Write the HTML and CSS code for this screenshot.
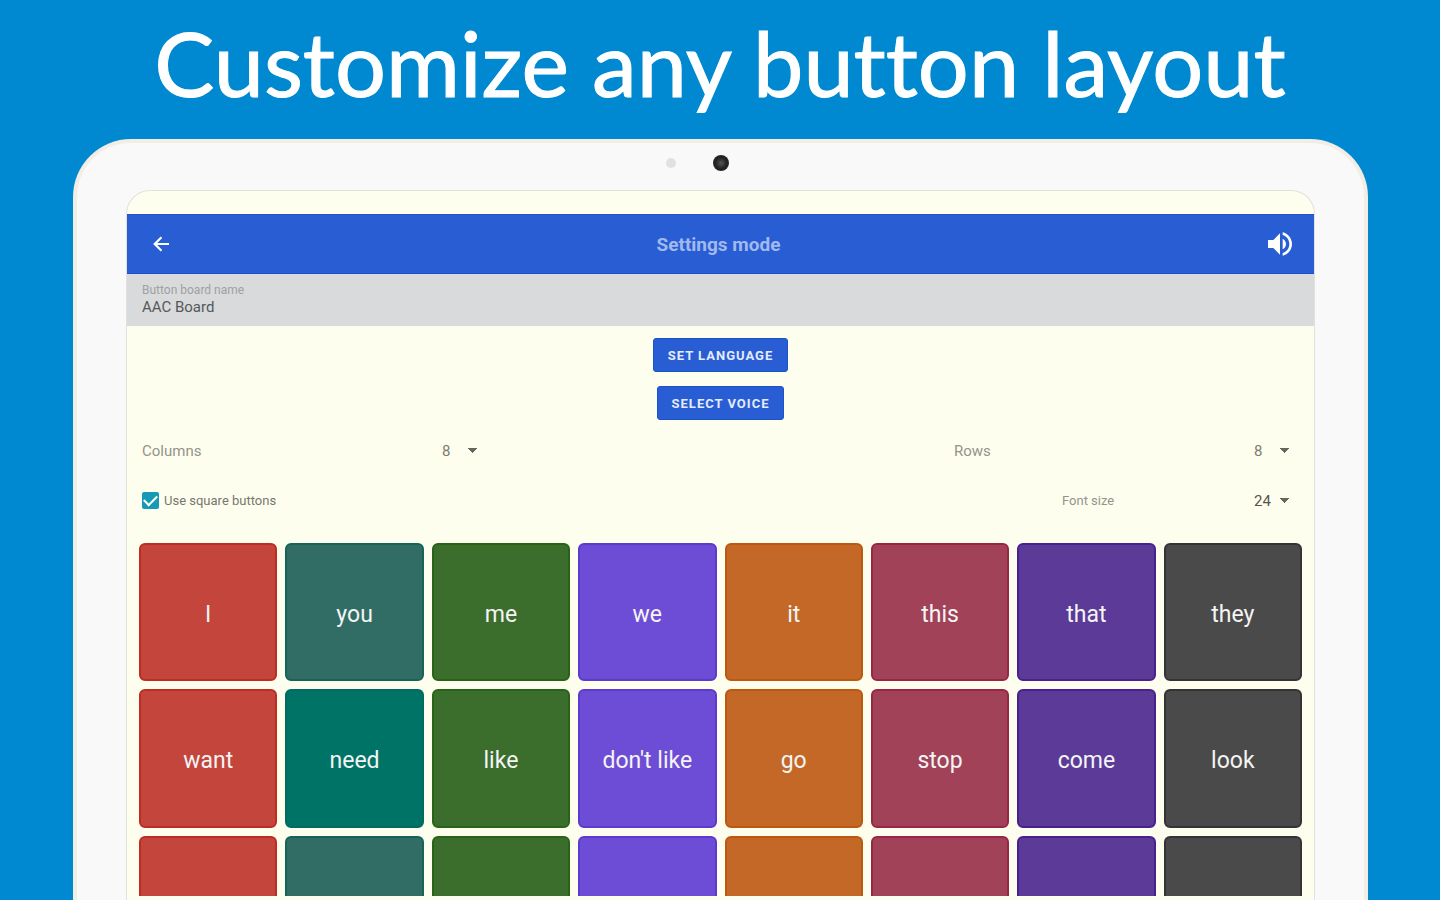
FILE: index.html
```html
<!DOCTYPE html>
<html lang="en">
<head>
<meta charset="utf-8">
<title>Customize any button layout</title>
<link rel="stylesheet" href="styles.css">
</head>
<body>
<h1 class="headline">Customize any button layout</h1>
<div class="tablet">
  <div class="bezel"><span class="sensor"></span><span class="camera"></span></div>
  <main class="screen">
    <header class="appbar">
      <button class="icon-button" aria-label="Back">
        <svg width="24" height="24" viewBox="0 0 24 24" fill="none" stroke="#fff" stroke-width="2.200"><path d="M20 12H6M12.500 5.200L5.700 12l6.800 6.800"/></svg>
      </button>
      <h2 class="appbar-title">Settings mode</h2>
      <button class="icon-button" aria-label="Speak">
        <svg width="32" height="32" viewBox="0 0 24 24" fill="#fff"><path d="M3 9v6h4l5 5V4L7 9H3zm13.500 3c0-1.770-1.020-3.290-2.500-4.030v8.050c1.480-.730 2.500-2.250 2.500-4.020zM14 3.230v2.060c2.890.860 5 3.540 5 6.710s-2.110 5.850-5 6.710v2.060c4.010-.910 7-4.490 7-8.770s-2.990-7.860-7-8.770z"/></svg>
      </button>
    </header>
    <div class="name-field">
      <label class="name-label" for="board-name">Button board name</label>
      <input class="name-input" id="board-name" type="text" value="AAC Board">
    </div>
    <div class="actions">
      <button class="action">SET LANGUAGE</button>
      <button class="action">SELECT VOICE</button>
    </div>
    <div class="options">
      <div class="option option-wide">
        <label for="columns">Columns</label>
        <select class="picker" id="columns"><option>8</option></select>
      </div>
      <div class="option option-wide">
        <label for="rows">Rows</label>
        <select class="picker" id="rows"><option>8</option></select>
      </div>
    </div>
    <div class="options options-last">
      <label class="check"><input class="checkbox" type="checkbox" checked>Use square buttons</label>
      <div class="option option-font">
        <label for="font-size">Font size</label>
        <select class="picker picker-strong" id="font-size"><option>24</option></select>
      </div>
    </div>
    <div class="board">
      <button class="tile red">I</button>
      <button class="tile teal">you</button>
      <button class="tile green">me</button>
      <button class="tile violet">we</button>
      <button class="tile orange">it</button>
      <button class="tile rose">this</button>
      <button class="tile purple">that</button>
      <button class="tile gray">they</button>
      <button class="tile red">want</button>
      <button class="tile deep-teal">need</button>
      <button class="tile green">like</button>
      <button class="tile violet">don't like</button>
      <button class="tile orange">go</button>
      <button class="tile rose">stop</button>
      <button class="tile purple">come</button>
      <button class="tile gray">look</button>
      <button class="tile red" aria-label="Empty"></button>
      <button class="tile teal" aria-label="Empty"></button>
      <button class="tile green" aria-label="Empty"></button>
      <button class="tile violet" aria-label="Empty"></button>
      <button class="tile orange" aria-label="Empty"></button>
      <button class="tile rose" aria-label="Empty"></button>
      <button class="tile purple" aria-label="Empty"></button>
      <button class="tile gray" aria-label="Empty"></button>
    </div>
  </main>
</div>
</body>
</html>
```

FILE: styles.css
```css
* { box-sizing: border-box; }
body {
  margin: 0;
  height: 100vh;
  display: flex;
  flex-direction: column;
  overflow: hidden;
  background: #0089d0;
  font-family: Roboto, sans-serif;
}
button, input, select { font-family: inherit; }
.headline {
  margin: 0;
  padding-top: 7px;
  height: 139px;
  flex: none;
  font: 400 90px/110px Lato, sans-serif;
  font-variant-ligatures: none;
  -webkit-text-stroke: 1px #fff;
  color: #fff;
  text-align: center;
  white-space: nowrap;
}
.tablet {
  flex: 1;
  min-height: 0;
  display: flex;
  flex-direction: column;
  margin: 0 72px 0 73px;
  padding: 0 49px;
  border: 4px solid #f3eee5;
  border-bottom: 0;
  border-radius: 58px 58px 0 0;
  background: #f9f9fa;
}
.bezel {
  flex: none;
  position: relative;
  height: 47px;
  display: flex;
  justify-content: center;
  padding-top: 12px;
}
.camera {
  width: 16px;
  height: 16px;
  border-radius: 50%;
  background: radial-gradient(circle, #555 0, #222 50%, #292929 100%);
}
.sensor {
  position: absolute;
  top: 15px;
  left: calc(50% - 55px);
  width: 10px;
  height: 10px;
  border-radius: 50%;
  background: #e1e1e1;
}
.screen {
  flex: 1;
  min-height: 0;
  display: flex;
  flex-direction: column;
  padding-top: 23px;
  padding-bottom: 4px;
  border: 1px solid #e1e2df;
  border-bottom: 0;
  border-radius: 24px 24px 0 0;
  background: #fefeee;
}
.appbar {
  flex: none;
  height: 60px;
  display: flex;
  align-items: center;
  justify-content: space-between;
  padding: 0 18px 0 22px;
  background: #295dd3;
  border-top: 1px solid #1d55cd;
  border-bottom: 1px solid #1650cd;
}
.icon-button {
  display: flex;
  padding: 0;
  border: 0;
  background: none;
}
.appbar-title {
  margin: 0;
  padding-top: 2px;
  font-size: 19px;
  line-height: 24px;
  font-weight: 700;
  color: #a0b9ee;
}
.name-field {
  flex: none;
  height: 52px;
  display: flex;
  flex-direction: column;
  padding: 9px 15px 0;
  background: #d9dadb;
}
.name-label { font-size: 12px; line-height: 14px; color: #9fa1a2; }
.name-input {
  width: 100%;
  height: 20px;
  padding: 0;
  border: 0;
  background: none;
  font-size: 15px;
  color: #56585a;
}
.actions {
  flex: none;
  display: flex;
  flex-direction: column;
  align-items: center;
  gap: 14px;
  padding-top: 12px;
}
.action {
  height: 34px;
  padding: 0 14px;
  border: 1px solid #1b52cb;
  border-radius: 3px;
  background: #295dd3;
  font-size: 13px;
  font-weight: 700;
  letter-spacing: 1px;
  color: #e4ebfb;
}
.options {
  flex: none;
  height: 50px;
  margin-top: 6px;
  padding: 0 24px 0 15px;
  display: flex;
  align-items: center;
  justify-content: space-between;
  font-size: 15px;
  color: #94948b;
}
.options-last { height: 49px; margin-top: 0; }
.option { display: flex; justify-content: space-between; align-items: center; }
.option-wide { width: 336px; }
.option-font { width: 228px; font-size: 13px; }
.picker {
  appearance: none;
  width: 36px;
  height: 24px;
  padding: 0;
  border: 0;
  border-radius: 0;
  background: conic-gradient(from 315deg at 50% 5px, #66665f 90deg, transparent 0) 26px 9px / 9px 5px no-repeat;
  font-size: 15px;
  color: #7c7c74;
}
.picker-strong { color: #55554f; }
.check { display: flex; align-items: center; gap: 5px; font-size: 13px; color: #77776f; }
.checkbox {
  appearance: none;
  width: 17px;
  height: 17px;
  margin: 0;
  border-radius: 2px;
  background: #1699b5;
  display: grid;
  place-items: center;
}
.checkbox::after {
  content: "";
  width: 11px;
  height: 6px;
  border-left: 2px solid #fff;
  border-bottom: 2px solid #fff;
  rotate: -45deg;
  margin-bottom: 3px;
}
.board {
  flex: 1;
  min-height: 0;
  overflow: hidden;
  display: grid;
  grid-template-columns: repeat(8, 1fr);
  align-content: start;
  gap: 8px;
  margin-top: 18px;
  padding: 0 12px;
}
.tile {
  aspect-ratio: 1;
  min-width: 0;
  padding: 4px 0 0;
  border: 2px solid;
  border-radius: 6px;
  font-size: 23px;
  color: #f4f4f4;
}
.red { background: #c3453b; border-color: #bd2d24; }
.teal { background: #316d64; border-color: #15645a; }
.deep-teal { background: #007367; border-color: #006b5e; }
.green { background: #3b6d2d; border-color: #286416; }
.violet { background: #6e4dd6; border-color: #5c39cf; }
.orange { background: #c36827; border-color: #bd590e; }
.rose { background: #a24259; border-color: #992644; }
.purple { background: #5c3a97; border-color: #48208f; }
.gray { background: #4a4a4a; border-color: #343437; }
```
